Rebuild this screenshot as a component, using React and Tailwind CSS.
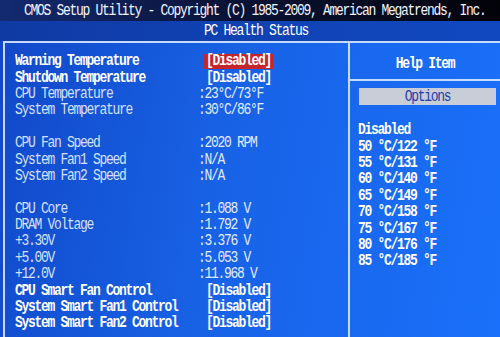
import React from "react";

const rows = [
  { label: "Warning Temperature", value: "[Disabled]", bold: true, selected: true },
  { label: "Shutdown Temperature", value: "[Disabled]", bold: true },
  { label: "CPU Temperature", value: ":23°C/73°F" },
  { label: "System Temperature", value: ":30°C/86°F" },
  null,
  { label: "CPU Fan Speed", value: ":2020 RPM" },
  { label: "System Fan1 Speed", value: ":N/A" },
  { label: "System Fan2 Speed", value: ":N/A" },
  null,
  { label: "CPU Core", value: ":1.088 V" },
  { label: "DRAM Voltage", value: ":1.792 V" },
  { label: "+3.30V", value: ":3.376 V" },
  { label: "+5.00V", value: ":5.053 V" },
  { label: "+12.0V", value: ":11.968 V" },
  { label: "CPU Smart Fan Control", value: "[Disabled]", bold: true },
  { label: "System Smart Fan1 Control", value: "[Disabled]", bold: true },
  { label: "System Smart Fan2 Control", value: "[Disabled]", bold: true },
];

const help = [
  "Disabled",
  "50 °C/122 °F",
  "55 °C/131 °F",
  "60 °C/140 °F",
  "65 °C/149 °F",
  "70 °C/158 °F",
  "75 °C/167 °F",
  "80 °C/176 °F",
  "85 °C/185 °F",
];

// bios font is tall and narrow
function T({ children, className = "" }) {
  return <span className={"inline-block leading-[12px] scale-y-[1.2] " + className}>{children}</span>;
}

function Row({ row }) {
  if (!row) return <div className="h-[16.4px]" />;
  return (
    <div className="flex h-[16.4px] items-center">
      <div
        className={
          "w-[183px] " +
          (row.bold ? "font-bold text-white" : "text-[#d3e0fa]")
        }
      >
        <T>{row.label}</T>
      </div>
      {row.bold ? (
        <div
          className={
            "ml-[6px] px-[2px] font-bold text-white " +
            (row.selected ? "bg-[#c4262c] h-[15px] flex items-center" : "")
          }
        >
          <T>{row.value}</T>
        </div>
      ) : (
        <div className="text-[#e2ebfc]">
          <T>{row.value}</T>
        </div>
      )}
    </div>
  );
}

export default function App() {
  return (
    <div className="w-[500px] h-[337px] overflow-hidden flex flex-col font-['Liberation_Mono',monospace] text-[13px] leading-[12px] tracking-[-1.3px] bg-[linear-gradient(100deg,#1148c8_0%,#1862e6_45%,#1a70fa_100%)]">
      <div className="h-[21px] shrink-0 flex items-center pl-[24px] text-[#f2f4ff] bg-[linear-gradient(90deg,#142a70_0%,#0a1438_45%,#020308_100%)]">
        <T>CMOS Setup Utility - Copyright (C) 1985-2009, American Megatrends, Inc.</T>
      </div>
      <div className="h-[20px] shrink-0 flex items-center pl-[204px] text-white bg-[linear-gradient(90deg,#0f3aa4_0%,#1042b4_50%,#1148c0_100%)]">
        <T>PC Health Status</T>
      </div>
      <div className="flex flex-1 ml-[3px] border-l-2 border-t-2 border-[#c6dcff]">
        <div className="w-[345px] shrink-0 border-r-2 border-[#c6dcff] pl-[10px] pt-[10px]">
          {rows.map((r, i) => (
            <Row key={i} row={r} />
          ))}
        </div>
        <div className="flex-1 flex flex-col">
          <div className="h-[38px] shrink-0 pt-[6px] flex items-center justify-center font-bold text-white border-b-2 border-[#c6dcff]">
            <T>Help Item</T>
          </div>
          <div className="mt-[7px] ml-[9px] mr-[4px] h-[17px] shrink-0 flex items-center justify-center bg-[#c9cdd8] text-[#1d3fa8]">
            <T>Options</T>
          </div>
          <div className="mt-[17px] pl-[8px] font-bold text-white">
            {help.map((h) => (
              <div key={h} className="h-[16.4px] flex items-center">
                <T>{h}</T>
              </div>
            ))}
          </div>
        </div>
      </div>
    </div>
  );
}
